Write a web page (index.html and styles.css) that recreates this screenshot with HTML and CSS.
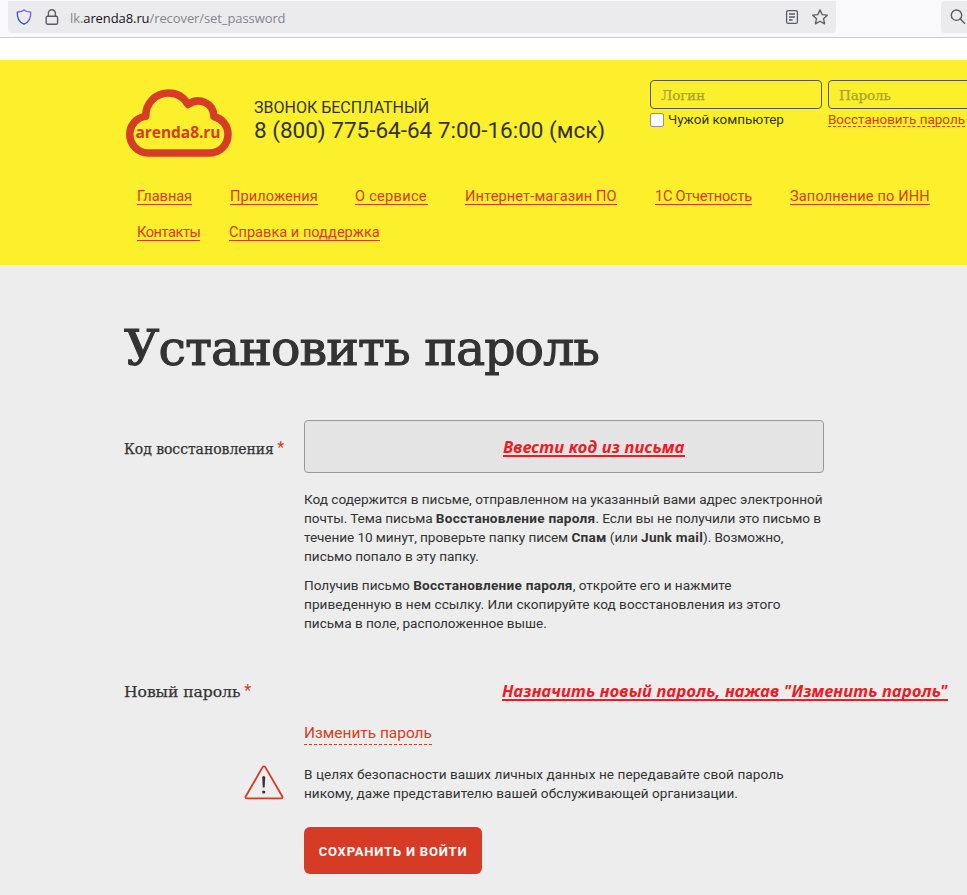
FILE: index.html
```
<!DOCTYPE html>
<html lang="ru">
<head>
<meta charset="utf-8">
<title>Установить пароль</title>
<link rel="stylesheet" href="styles.css">
</head>
<body>
<div class="toolbar">
  <div class="address">
    <svg class="shield" width="16" height="16" viewBox="0 0 16 16" fill="none" stroke-width="1.3"><defs><linearGradient id="g" x1="1" y1="0" x2="0" y2="1"><stop offset="0" stop-color="#9059ff"/><stop offset="1" stop-color="#0250bb"/></linearGradient></defs><path stroke="url(#g)" stroke-linejoin="round" d="M8 .9 C6 2.4 3.800 2.900 1.300 3.100 C1 7.500 2.200 12.800 8 15.200 C13.800 12.800 15 7.500 14.700 3.100 C12.200 2.900 10 2.400 8 .9Z"/></svg>
    <svg class="lock" width="14" height="16" viewBox="0 0 14 16" fill="none" stroke="#5b5b66" stroke-width="1.4"><rect x="1.200" y="7.200" width="11.400" height="8" rx="1.500"/><path d="M3.400 7V4.200a3.500 3.500 0 0 1 7 0V7"/></svg>
    <span class="url">lk.<b>arenda8.ru</b>/recover/set_password</span>
    <svg class="reader" width="14" height="16" viewBox="0 0 14 16" fill="none" stroke="#5b5b66" stroke-width="1.300"><rect x="1.600" y="1.600" width="10.800" height="12.800" rx="1.500"/><path d="M4 5h6M4 8h6M4 11h3.500"/></svg>
    <svg class="star" width="16" height="16" viewBox="0 0 16 16" fill="none" stroke="#5b5b66" stroke-width="1.300" stroke-linejoin="round"><path d="M8 .9l2.200 4.700 5.100.6-3.800 3.500 1.100 5.200L8 12.300l-4.600 2.600 1.100-5.200L.7 6.200l5.100-.6z"/></svg>
  </div>
  <div class="search"><svg width="16" height="16" viewBox="0 0 16 16" fill="none" stroke="#5b5b66" stroke-width="1.400"><circle cx="6.500" cy="6.200" r="5.200"/><path d="M10.300 10l4.300 4.300" stroke-linecap="round"/></svg></div>
</div>

<header class="header">
  <div class="top">
    <svg class="logo" width="106" height="68" viewBox="126 89 106 68"><path fill="none" stroke="#d63c26" stroke-width="7.500" stroke-linejoin="round" d="M148.300 153 A18.600 18.600 0 0 1 129.800 134.500 C129.800 125 136.500 117.500 145.800 116.200 C145.500 103 156 93 168.500 93 C177 93 184 97.500 188 104.500 C199 96.500 213.500 103 213.800 116.500 C222 118.500 228 125.500 228 134.500 A18.500 18.500 0 0 1 209.500 153 Z"/><text class="logo-text" x="135.500" y="137.500" textLength="85">arenda8.ru</text></svg>
    <div class="phone"><div class="free">ЗВОНОК БЕСПЛАТНЫЙ</div><div class="number">8 (800) 775-64-64 7:00-16:00 (мск)</div></div>
    <form class="login">
      <div class="cell"><div class="field">Логин</div><label class="foreign"><i class="check"></i>Чужой компьютер</label></div>
      <div class="cell"><div class="field">Пароль</div><a class="restore">Восстановить пароль</a></div>
    </form>
  </div>
  <nav class="nav">
    <div class="row first"><a class="n1">Главная</a><a class="n2">Приложения</a><a class="n3">О сервисе</a><a class="n4">Интернет-магазин ПО</a><a class="n5">1С Отчетность</a><a class="n6">Заполнение по ИНН</a></div>
    <div class="row"><a class="n7">Контакты</a><a class="n8">Справка и поддержка</a></div>
  </nav>
</header>

<main class="main">
  <h1>Установить пароль</h1>
  <div class="form-row code-row">
    <div class="label">Код восстановления <sup>*</sup></div>
    <div class="code"><span class="note">Ввести код из письма</span></div>
  </div>
  <div class="help">
    <p>Код содержится в письме, отправленном на указанный вами адрес электронной<br><span class="l2">почты. Тема письма <b>Восстановление пароля</b>. Если вы не получили это письмо в</span><br><span class="l3">течение 10 минут, проверьте папку писем <b>Спам</b> (или <b>Junk mail</b>). Возможно,</span><br>письмо попало в эту папку.</p>
    <p>Получив письмо <b>Восстановление пароля</b>, откройте его и нажмите<br><span class="l6">приведенную в нем ссылку. Или скопируйте код восстановления из этого</span><br>письма в поле, расположенное выше.</p>
  </div>
  <div class="form-row new-row">
    <div class="label new">Новый пароль <sup>*</sup></div>
    <span class="note assign">Назначить новый пароль, нажав "Изменить пароль"</span>
  </div>
  <div class="indent"><a class="change">Изменить пароль</a></div>
  <div class="warning">
    <svg width="40" height="35" viewBox="0 0 40 35" fill="none"><path d="M18.600 2.200 a1.500 1.500 0 0 1 2.700 0 L38.300 31.500 a1.200 1.200 0 0 1 -1 1.900 H2.700 a1.200 1.200 0 0 1 -1 -1.900 Z" stroke="#d63c26" stroke-width="1.800"/><path d="M18.200 12.500 a1.400 1.400 0 0 1 3 0 L20.600 22.500 h-1.800Z" fill="#333"/><circle cx="19.700" cy="27" r="1.600" fill="#333"/></svg>
    <p class="safe">В целях безопасности ваших личных данных не передавайте свой пароль<br><span class="safe2">никому, даже представителю вашей обслуживающей организации.</span></p>
  </div>
  <div class="indent"><button class="save">СОХРАНИТЬ И ВОЙТИ</button></div>
</main>
</body>
</html>
```
FILE: styles.css
```
* { box-sizing: border-box; }
body { margin: 0; height: 895px; overflow: hidden; background: #ededed; color: #333; font: 13.6px/19px Roboto, "Liberation Sans", sans-serif; }
svg { display: block; flex: none; }
p { margin: 0; }

.toolbar { height: 38px; display: flex; align-items: flex-start; justify-content: space-between; background: #f9f9fb; border-bottom: 1px solid #ccc; padding: 1px 0 0 8px; }
.address { width: 828px; height: 32px; border-radius: 0 0 4px 4px; background: #ebebed; display: flex; align-items: center; padding: 0 8px; }
.lock { margin-left: 13px; }
.url { margin-left: 11px; flex: 1; font: 13px/20px "Open Sans", sans-serif; letter-spacing: -.09px; color: #85858b; padding-top: 2px; }
.url b { font-weight: 400; color: #15141a; }
.star { margin-left: 13px; }
.search { width: 26px; height: 32px; background: #ebebed; border-radius: 4px 0 0 4px; padding: 8px 0 0 9px; overflow: hidden; }

.header { border-top: 22px solid #fff; height: 227px; background: #fcef2b; overflow: hidden; }
.top { display: flex; height: 127px; padding-left: 126px; }
.logo { margin-top: 29px; overflow: visible; }
.logo-text { font: 700 15.5px "Open Sans", sans-serif; fill: #d63c26; }
.phone { width: 396px; padding: 39px 0 0 22px; white-space: nowrap; flex: none; }
.free { font-size: 16px; line-height: 18px; }
.number { font-size: 22.5px; line-height: 26px; }
.login { display: flex; gap: 6px; padding: 20px 0 0 22px; flex: none; }
.cell { width: 172px; }
.field { height: 29px; border: 1px solid #555; border-radius: 4px; padding: 0 10px; font: 13.6px/28px "DejaVu Serif", serif; letter-spacing: -.2px; color: #a8a035; -webkit-text-stroke: .25px #a8a035; }
.foreign { display: flex; align-items: center; gap: 4px; height: 21px; font-size: 13.45px; }
.check { width: 14px; height: 14px; background: #fff; border: 1px solid #8f8f9d; border-radius: 2px; }
.restore { display: inline-block; font-size: 13.45px; line-height: 15px; margin-top: 3px; height: 15px; color: #d63c26; border-bottom: 1px dashed #d63c26; }
.nav { padding-left: 137px; font-size: 14.6px; }
.nav a { color: #d63c26; line-height: 15px; height: 16px; border-bottom: 1px solid #d63c26; white-space: nowrap; flex: none; }
.row { display: flex; height: 36px; padding-top: 2px; }
.n1 { width: 55px; margin-right: 38px; letter-spacing: -.06px; }
.n2 { width: 88px; margin-right: 37px; letter-spacing: .05px; }
.n3 { width: 73px; margin-right: 37px; letter-spacing: .27px; }
.n4 { width: 152px; margin-right: 38px; letter-spacing: .12px; }
.n5 { width: 97px; margin-right: 38px; letter-spacing: -.27px; }
.n6 { width: 140px; letter-spacing: .13px; }
.n7 { width: 63px; margin-right: 29px; letter-spacing: -.45px; }
.n8 { width: 151px; }

.main { padding: 53px 0 0 124px; }
h1 { margin: 0; height: 102px; font: 400 49px/62px "DejaVu Serif", serif; letter-spacing: -.97px; -webkit-text-stroke: 1.1px #333; white-space: nowrap; }
.form-row { display: flex; align-items: center; }
.label { width: 180px; font: 14px/20px "DejaVu Serif", serif; letter-spacing: -.05px; -webkit-text-stroke: .25px #333; padding-top: 4px; white-space: nowrap; }
.new { width: 378px; font-size: 15.6px; padding: 2px 0 0; }
sup { font: 16px/10px Roboto, sans-serif; color: #d63c26; -webkit-text-stroke: 0; vertical-align: 1px; margin-left: -1px; }
.code { width: 520px; height: 53px; border: 1px solid #999; border-radius: 4px; background: #e4e4e4; display: flex; align-items: center; padding-left: 198px; }
.note { font: italic 700 16.5px/19px "Noto Sans", sans-serif; letter-spacing: .2px; color: #ed1c24; border-bottom: 2px solid #ed1c24; height: 20px; white-space: nowrap; }
.help { padding: 17px 0 0 180px; letter-spacing: -.02px; white-space: nowrap; }
.help p { margin-bottom: 10px; }
.help b { letter-spacing: .25px; }
.l2, .l3 { letter-spacing: -.08px; }
.l6 { letter-spacing: .03px; }
.new-row { margin-top: 38px; height: 40px; }
.assign { letter-spacing: .195px; }
.indent { padding-left: 180px; display: flex; }
.change { margin-top: 12px; height: 22px; font-size: 15.45px; line-height: 20px; color: #d63c26; border-bottom: 1px dashed #d63c26; }
.warning { display: flex; gap: 20px; padding: 20px 0 0 120px; }
.safe { letter-spacing: .06px; white-space: nowrap; }
.safe2 { letter-spacing: .01px; }
.save { margin-top: 24px; width: 178px; height: 47px; border: 0; border-radius: 6px; padding: 2px 0 0; background: #d53b25; color: #fff; font: 700 13px/20px Roboto, sans-serif; letter-spacing: .800px; white-space: nowrap; }
```
